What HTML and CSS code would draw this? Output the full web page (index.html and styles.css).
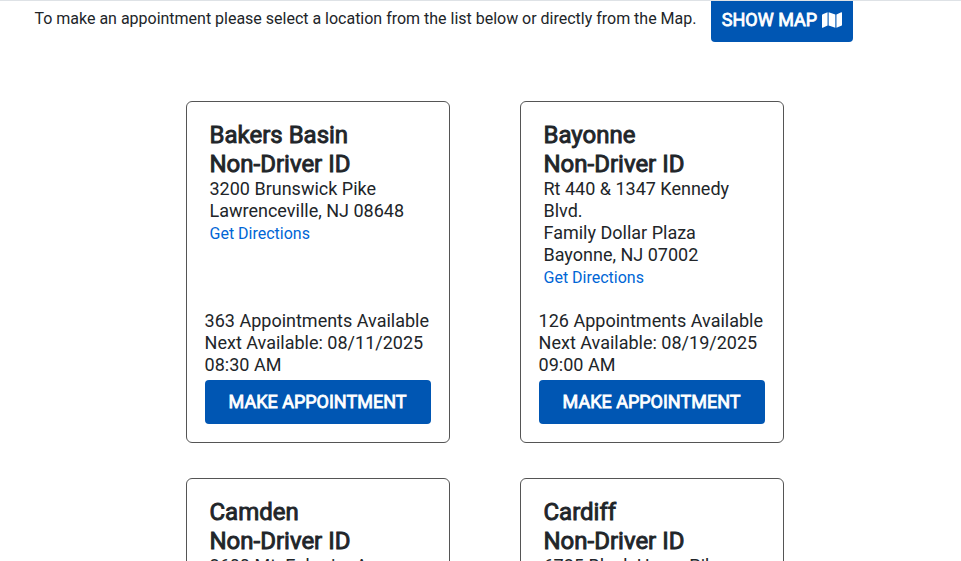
FILE: index.html
```
<!DOCTYPE html>
<html lang="en">
	<head>
		<meta charset="utf-8">
		<title>Select a Location</title>
		<meta name="viewport" content="width=device-width, initial-scale=1">
		<link rel="stylesheet" href="styles.css">
	</head>
	<body>
		<header class="intro">
			<span class="intro-text">To make an appointment please select a location from the list below or directly from the Map.</span>
			<button class="btn btn-map" type="button">
				<span>SHOW MAP</span>
				<svg class="icon" viewBox="0 0 576 512" aria-hidden="true">
					<path d="M0 117.66v346.32c0 11.32 11.43 19.06 21.94 14.86L160 416V32L20.12 87.95A32 32 0 0 0 0 117.66zM192 416l192 64V96L192 32v384zM554.06 33.16L416 96v384l139.88-55.95A32 32 0 0 0 576 394.34V48.02c0-11.32-11.43-19.06-21.94-14.86z"/>
				</svg>
			</button>
		</header>
		<main class="locations">
			<section class="card">
				<div class="place">
					<h2>Bakers Basin<br>Non-Driver ID</h2>
					<address>3200 Brunswick Pike<br>Lawrenceville, NJ 08648</address>
					<a class="directions" href="#">Get Directions</a>
				</div>
				<div class="booking">
					<p>363 Appointments Available<br>Next Available: 08/11/2025 08:30 AM</p>
					<button class="btn btn-make" type="button">MAKE APPOINTMENT</button>
				</div>
			</section>
			<section class="card">
				<div class="place">
					<h2>Bayonne<br>Non-Driver ID</h2>
					<address>Rt 440 &amp; 1347 Kennedy Blvd.<br>Family Dollar Plaza<br>Bayonne, NJ 07002</address>
					<a class="directions" href="#">Get Directions</a>
				</div>
				<div class="booking">
					<p>126 Appointments Available<br>Next Available: 08/19/2025 09:00 AM</p>
					<button class="btn btn-make" type="button">MAKE APPOINTMENT</button>
				</div>
			</section>
			<section class="card">
				<div class="place">
					<h2>Camden<br>Non-Driver ID</h2>
					<address>2600 Mt. Ephraim Ave</address>
				</div>
			</section>
			<section class="card">
				<div class="place">
					<h2>Cardiff<br>Non-Driver ID</h2>
					<address>6725 Black Horse Pike</address>
				</div>
			</section>
		</main>
	</body>
</html>
```

FILE: styles.css
```
* {
	box-sizing: border-box;
}
html, body {
	margin: 0;
	padding: 0;
	height: 100%;
	overflow: hidden;
}
body {
	background: #fff;
	color: #212529;
	font-family: Roboto, sans-serif;
	font-size: 16px;
	border-top: 1px solid #dee2e6;
}
.intro {
	display: flex;
	align-items: flex-start;
	padding-left: 34.5px;
	height: 41px;
}
.intro-text {
	width: 676.5px;
	padding-top: 6px;
	line-height: 24px;
	letter-spacing: -0.01px;
	white-space: nowrap;
}
.btn {
	border: none;
	border-radius: 4px;
	background: #0056b3;
	color: #fff;
	font-family: inherit;
	font-size: 18px;
	line-height: 27px;
	-webkit-text-stroke: 0.8px;
	cursor: pointer;
}
.btn-map {
	display: flex;
	align-items: center;
	justify-content: center;
	gap: 5px;
	width: 142px;
	height: 41px;
	padding: 0 0 4px;
	border-radius: 0 0 4px 4px;
}
.icon {
	width: 20px;
	height: 18px;
	margin-top: 1px;
	fill: #fff;
}
.locations {
	display: grid;
	grid-template-columns: 264px 264px;
	grid-auto-rows: 342px;
	gap: 35px 70px;
	padding: 59px 0 0 186px;
}
.card {
	display: flex;
	flex-direction: column;
	justify-content: space-between;
	padding: 18px;
	border: 1px solid #555;
	border-radius: 6px;
}
.place {
	padding: 1px 5px 0 4.5px;
}
.card h2 {
	margin: 0 0 -1px;
	font-size: 24px;
	font-weight: 400;
	line-height: 28.8px;
	-webkit-text-stroke: 0.9px;
}
.card address {
	font-size: 18px;
	font-style: normal;
	line-height: 22px;
}
.directions {
	display: block;
	color: #0066d6;
	line-height: 24px;
	text-decoration: none;
}
.booking p {
	margin: 0 -1px 4px -0.4px;
	font-size: 18px;
	line-height: 22px;
}
.btn-make {
	display: block;
	width: 226px;
	height: 44px;
	padding: 0 1px 2px 0;
}
```
